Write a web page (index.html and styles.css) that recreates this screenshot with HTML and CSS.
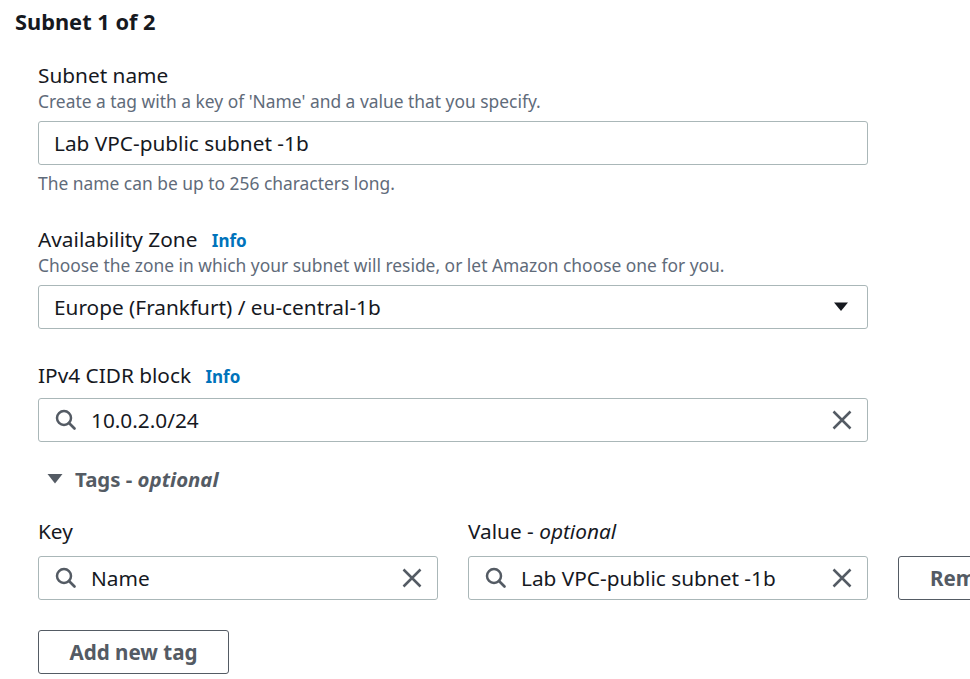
FILE: index.html
```html
<!DOCTYPE html>
<html>
<head>
<meta charset="utf-8">
<link rel="stylesheet" href="styles.css">
</head>
<body>
<div class="page">
  <h2 class="title">Subnet 1 of 2</h2>
  <div class="body">
    <div class="field f-name">
      <div class="label">Subnet name</div>
      <div class="desc">Create a tag with a key of 'Name' and a value that you specify.</div>
      <div class="input"><span class="val">Lab VPC-public subnet -1b</span></div>
      <div class="constraint">The name can be up to 256 characters long.</div>
    </div>
    <div class="field f-az">
      <div class="label">Availability Zone <a class="info">Info</a></div>
      <div class="desc">Choose the zone in which your subnet will reside, or let Amazon choose one for you.</div>
      <div class="input select"><span class="val">Europe (Frankfurt) / eu-central-1b</span>
        <svg class="caret" width="16" height="16" viewBox="0 0 16 16"><path d="M1 3.5h14L8 12z" fill="#16191f"/></svg>
      </div>
    </div>
    <div class="field f-cidr">
      <div class="label">IPv4 CIDR block <a class="info">Info</a></div>
      <div class="input search">
        <svg class="sicon" width="22" height="22" viewBox="0 0 22 22"><circle cx="9" cy="9" r="7" fill="none" stroke="#545b64" stroke-width="2.5"/><path d="M14 14l5.5 5.5" stroke="#545b64" stroke-width="2.7" stroke-linecap="round"/></svg>
        <span class="val">10.0.2.0/24</span>
        <svg class="xicon" width="20" height="20" viewBox="0 0 20 20"><path d="M1.5 1.5l17 17M18.5 1.5l-17 17" stroke="#545b64" stroke-width="2.5"/></svg>
      </div>
    </div>
    <div class="tags-head">
      <svg class="tcaret" width="16" height="16" viewBox="0 0 16 16"><path d="M0.5 3h15L8 12.5z" fill="#545b64"/></svg>
      <span>Tags - <i>optional</i></span>
    </div>
    <div class="tag-row">
      <div class="tag-col">
        <div class="label">Key</div>
        <div class="input search">
          <svg class="sicon" width="22" height="22" viewBox="0 0 22 22"><circle cx="9" cy="9" r="7" fill="none" stroke="#545b64" stroke-width="2.5"/><path d="M14 14l5.5 5.5" stroke="#545b64" stroke-width="2.7" stroke-linecap="round"/></svg>
          <span class="val">Name</span>
          <svg class="xicon" width="20" height="20" viewBox="0 0 20 20"><path d="M1.5 1.5l17 17M18.5 1.5l-17 17" stroke="#545b64" stroke-width="2.5"/></svg>
        </div>
      </div>
      <div class="tag-col">
        <div class="label">Value - <i>optional</i></div>
        <div class="input search">
          <svg class="sicon" width="22" height="22" viewBox="0 0 22 22"><circle cx="9" cy="9" r="7" fill="none" stroke="#545b64" stroke-width="2.5"/><path d="M14 14l5.5 5.5" stroke="#545b64" stroke-width="2.7" stroke-linecap="round"/></svg>
          <span class="val">Lab VPC-public subnet -1b</span>
          <svg class="xicon" width="20" height="20" viewBox="0 0 20 20"><path d="M1.5 1.5l17 17M18.5 1.5l-17 17" stroke="#545b64" stroke-width="2.5"/></svg>
        </div>
      </div>
      <div class="tag-btn">
        <button class="btn remove">Remove</button>
      </div>
    </div>
    <button class="btn add">Add new tag</button>
  </div>
</div>
</body>
</html>
```

FILE: styles.css
```css
html, body {
  margin: 0;
  padding: 0;
  background: #ffffff;
  overflow: hidden;
}
body {
  font-family: "Noto Sans", "Open Sans", sans-serif;
  color: #16191f;
}
.page {
  padding: 10px 0 0 15px;
}
.title {
  margin: 0;
  font-size: 21.8px;
  line-height: 24px;
  font-weight: 700;
  color: #16191f;
}
.body {
  padding-left: 23px;
}
.field {
  width: 830px;
}
.f-name { margin-top: 30px; }
.f-az { margin-top: 35px; }
.f-cidr { margin-top: 35px; }
.label {
  height: 22px;
  font-size: 20.8px;
  line-height: 22px;
  color: #16191f;
  white-space: nowrap;
}
.info {
  font-size: 17px;
  line-height: 1;
  font-weight: 700;
  color: #0073bb;
  margin-left: 9px;
}
.desc {
  margin-top: 5px;
  font-size: 17.4px;
  line-height: 20px;
  color: #5f6b7a;
  white-space: nowrap;
}
.desc + .input { margin-top: 10px; }
.label + .input { margin-top: 12px; }
.input {
  box-sizing: border-box;
  height: 44px;
  border: 1px solid #aab7b8;
  border-radius: 3px;
  display: flex;
  align-items: center;
  padding: 0 15px;
  font-size: 20.8px;
  color: #16191f;
}
.input .val { flex: 1; white-space: nowrap; overflow: hidden; }
.select { padding-right: 18px; }
.caret { flex: none; }
.search { padding-left: 16px; padding-right: 15px; }
.sicon { flex: none; margin-right: 14px; }
.xicon { flex: none; }
.constraint {
  margin-top: 8px;
  font-size: 17.4px;
  line-height: 20px;
  color: #5f6b7a;
  white-space: nowrap;
}
.tags-head {
  margin-top: 26px;
  height: 22px;
  display: flex;
  align-items: center;
  font-size: 20.4px;
  line-height: 22px;
  font-weight: 700;
  color: #545b64;
  padding-left: 9px;
}
.tcaret { margin-right: 12px; }
.tags-head i { font-weight: 700; }
.tag-row {
  margin-top: 30px;
  display: flex;
  gap: 30px;
  align-items: flex-end;
}
.tag-col { width: 400px; flex: none; }
.tag-col .label + .input { margin-top: 14px; }
.tag-btn { flex: none; }
.btn {
  box-sizing: border-box;
  height: 44px;
  padding: 0 31px;
  border: 1px solid #545b64;
  border-radius: 3px;
  background: #fff;
  font-family: "Noto Sans", "Open Sans", sans-serif;
  font-size: 20.6px;
  font-weight: 700;
  color: #545b64;
  white-space: nowrap;
}
.add {
  display: block;
  margin-top: 30px;
  width: 191px;
  padding: 0;
}
```
